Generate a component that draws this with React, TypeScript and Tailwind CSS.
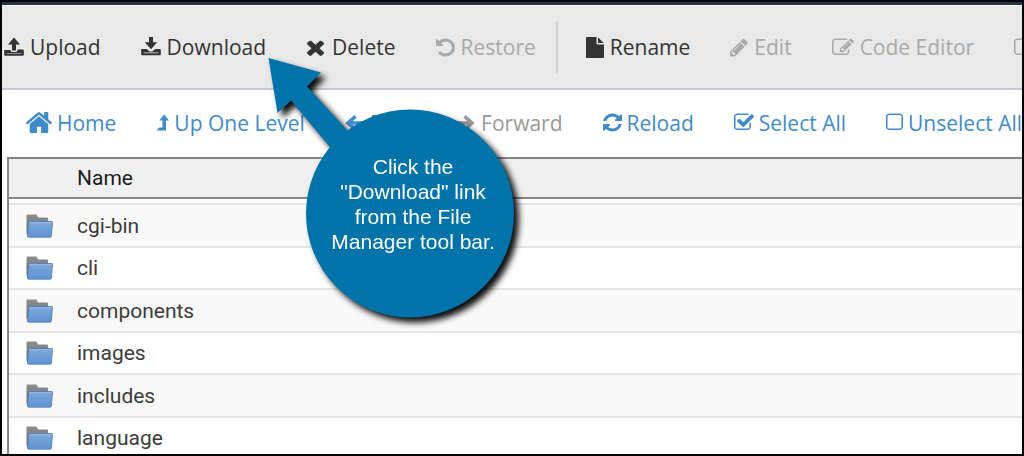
import type { ReactNode } from 'react';

type IconProps = { viewBox: string; className: string; children: ReactNode };

function Glyph({ viewBox, className, children }: IconProps) {
  return (
    <svg viewBox={viewBox} className={className} fill="currentColor" preserveAspectRatio="none" aria-hidden="true">
      {children}
    </svg>
  );
}

const UploadIcon = () => (
  <Glyph viewBox="0 0 20 20" className="w-5 h-5 shrink-0">
    <path d="M10 0.6 L16 7.4 H12 V13.4 H8 V7.4 H4 Z" />
    <path d="M0.2 13 H6.2 L7.6 14.9 H12.4 L13.8 12.4 H19 L19.8 13.2 V17.8 Q19.8 18.8 18.8 18.8 H1.2 Q0.2 18.8 0.2 17.8 Z M2.6 16.2 V16.8 H17.4 V16.2 Z" fillRule="evenodd" />
  </Glyph>
);

const DownloadIcon = () => (
  <Glyph viewBox="0 0 20 20" className="w-5 h-5 shrink-0">
    <path d="M8 0 H12 V5.2 H16.2 L10 12.2 L3.8 5.2 H8 Z" />
    <path d="M0.2 12 H5.6 L8.8 14.6 H11.2 L14.4 12 H19 L19.8 12.8 V17.2 Q19.8 18.2 18.8 18.2 H1.2 Q0.2 18.2 0.2 17.2 Z M2.6 15.6 V16.2 H17.4 V15.6 Z" fillRule="evenodd" />
  </Glyph>
);

const DeleteIcon = () => (
  <Glyph viewBox="302 0 1188 1792" className="w-[17px] h-[23px] ml-px mr-[2px] shrink-0">
    <path d="M1490 1322q0 40-28 68l-136 136q-28 28-68 28t-68-28l-294-294-294 294q-28 28-68 28t-68-28l-136-136q-28-28-28-68t28-68l294-294-294-294q-28-28-28-68t28-68l136-136q28-28 68-28t68 28l294 294 294-294q28-28 68-28t68 28l136 136q28 28 28 68t-28 68l-294 294 294 294q28 28 28 68z" />
  </Glyph>
);

const RestoreIcon = () => (
  <Glyph viewBox="128 0 1536 1792" className="w-[19px] h-[21px] shrink-0">
    <path d="M1664 896q0 156-61 298t-164 245-245 164-298 61q-172 0-327-72.5t-264-204.5q-7-10-6.5-22.5t8.5-20.5l137-138q10-9 25-9 16 2 23 12 73 95 179 147t225 52q104 0 198.5-40.5t163.5-109.5 109.5-163.5 40.5-198.5-40.5-198.5-109.5-163.5-163.5-109.5-198.5-40.5q-98 0-188 35.5t-160 101.5l137 138q31 30 14 69-17 40-59 40h-448q-26 0-45-19t-19-45v-448q0-42 40-59 39-17 69 14l130 129q107-101 244.5-156.5t284.5-55.5q156 0 298 61t245 164 164 245 61 298z" />
  </Glyph>
);

const RenameIcon = () => (
  <Glyph viewBox="128 0 1536 1792" className="w-[18px] h-[21px] shrink-0">
    <path d="M1152 512v-472q22 14 36 28l408 408q14 14 28 36h-472zm-128 32q0 40 28 68t68 28h544v1056q0 40-28 68t-68 28h-1344q-40 0-68-28t-28-68v-1600q0-40 28-68t68-28h800v544z" />
  </Glyph>
);

const EditIcon = () => (
  <Glyph viewBox="128 0 1536 1792" className="w-[18px] h-[21px] shrink-0">
    <path d="M491 1536l91-91-235-235-91 91v107h128v128h107zm523-928q0-22-22-22-10 0-17 7l-542 542q-7 7-7 17 0 22 22 22 10 0 17-7l542-542q7-7 7-17zm-54-192l416 416-832 832h-416v-416zm683 96q0 53-37 90l-166 166-416-416 166-165q36-38 90-38 53 0 91 38l235 234q37 39 37 91z" />
  </Glyph>
);

const EditorIcon = () => (
  <Glyph viewBox="0 0 1792 1792" className="w-[22px] h-[21px] shrink-0">
    <path d="M888 1184l116-116-152-152-116 116v56h96v96h56zm440-720q-16-16-33 1l-350 350q-17 17-1 33t33-1l350-350q17-17 1-33zm80 594v190q0 119-84.5 203.5t-203.5 84.5h-832q-119 0-203.5-84.5t-84.5-203.5v-832q0-119 84.5-203.5t203.5-84.5h832q63 0 117 25 15 7 18 23 3 17-9 29l-49 49q-14 14-32 8-23-6-45-6h-832q-66 0-113 47t-47 113v832q0 66 47 113t113 47h832q66 0 113-47t47-113v-126q0-13 9-22l64-64q15-15 35-7t20 29zm-96-738l288 288-672 672h-288v-288zm444 132l-92 92-288-288 92-92q28-28 68-28t68 28l152 152q28 28 28 68t-28 68z" />
  </Glyph>
);

const HomeIcon = () => (
  <Glyph viewBox="89 253 1614 1283" className="w-[26px] h-[21px] shrink-0">
    <path d="M1472 992v480q0 26-19 45t-45 19h-384v-384h-256v384h-384q-26 0-45-19t-19-45v-480q0-1 .5-3t.5-3l575-474 575 474q1 2 1 6zm223-69l-62 74q-8 9-21 11h-3q-13 0-21-7l-692-577-692 577q-12 8-24 7-13-2-21-11l-62-74q-8-10-7-23.5t11-21.5l719-599q32-26 76-26t76 26l244 204v-195q0-14 9-23t23-9h192q14 0 23 9t9 23v408l219 182q10 8 11 21.5t-7 23.5z" />
  </Glyph>
);

const UpIcon = () => (
  <Glyph viewBox="0 0 13 18" className="w-[13px] h-[18px] shrink-0">
    <path d="M8.2 0.6 L13 6.6 H10 V16.6 H0.6 L3.2 13.4 H6.4 V6.6 H3.4 Z" />
  </Glyph>
);

const BackIcon = () => (
  <Glyph viewBox="0 0 20 20" className="w-5 h-5 shrink-0">
    <path d="M10.5 3.4 L3 10 L10.5 16.6 M3 10 H19" fill="none" stroke="currentColor" strokeWidth="3.6" />
  </Glyph>
);

const ForwardIcon = () => (
  <Glyph viewBox="0 0 20 20" className="w-5 h-5 shrink-0">
    <path d="M8.5 3.4 L16 10 L8.5 16.6 M16 10 H1" fill="none" stroke="currentColor" strokeWidth="3.6" />
  </Glyph>
);

const ReloadIcon = () => (
  <Glyph viewBox="128 0 1536 1792" className="w-[19px] h-[21px] shrink-0">
    <path d="M1639 1056q0 5-1 7-64 268-268 434.5t-478 166.5q-146 0-282.5-55t-243.5-157l-129 129q-19 19-45 19t-45-19-19-45v-448q0-26 19-45t45-19h448q26 0 45 19t19 45-19 45l-137 137q71 66 161 102t187 36q134 0 250-65t186-179q11-17 53-117 8-23 30-23h192q13 0 22.5 9.5t9.5 22.5zm25-800v448q0 26-19 45t-45 19h-448q-26 0-45-19t-19-45 19-45l138-138q-148-137-349-137-134 0-250 65t-186 179q-11 17-53 117-8 23-30 23h-199q-13 0-22.5-9.5t-9.5-22.5v-7q65-268 270-434.5t480-166.5q146 0 284 55.5t245 156.5l130-129q19-19 45-19t45 19 19 45z" />
  </Glyph>
);

const CheckedIcon = () => (
  <Glyph viewBox="64 0 1664 1792" className="w-5 h-[21px] shrink-0">
    <path d="M1472 930v318q0 119-84.5 203.5t-203.5 84.5h-832q-119 0-203.5-84.5t-84.5-203.5v-832q0-119 84.5-203.5t203.5-84.5h832q63 0 117 25 15 7 18 23 3 17-9 29l-49 49q-10 10-23 10-3 0-9-2-23-6-45-6h-832q-66 0-113 47t-47 113v832q0 66 47 113t113 47h832q66 0 113-47t47-113v-254q0-13 9-22l64-64q10-10 23-10 6 0 12 3 20 8 20 29zm231-489l-814 814q-24 24-57 24t-57-24l-430-430q-24-24-24-57t24-57l110-110q24-24 57-24t57 24l263 263 647-647q24-24 57-24t57 24l110 110q24 24 24 57t-24 57z" />
  </Glyph>
);

const UncheckedIcon = () => (
  <Glyph viewBox="192 0 1408 1792" className="w-[17px] h-[21px] shrink-0">
    <path d="M1312 256h-832q-66 0-113 47t-47 113v832q0 66 47 113t113 47h832q66 0 113-47t47-113v-832q0-66-47-113t-113-47zm288 160v832q0 119-84.5 203.5t-203.5 84.5h-832q-119 0-203.5-84.5t-84.5-203.5v-832q0-119 84.5-203.5t203.5-84.5h832q119 0 203.5 84.5t84.5 203.5z" />
  </Glyph>
);

const FolderIcon = () => (
  <svg viewBox="0 0 27 24" className="block w-[27px] h-6" aria-hidden="true">
    <defs>
      <linearGradient id="folder-back" x1="0" y1="0" x2="0" y2="1">
        <stop offset="0" stopColor="#8e8e8e" />
        <stop offset="1" stopColor="#6a6d70" />
      </linearGradient>
      <linearGradient id="folder-front" x1="0" y1="0" x2="0" y2="1">
        <stop offset="0" stopColor="#7fa9da" />
        <stop offset="1" stopColor="#5f93d0" />
      </linearGradient>
    </defs>
    <path d="M0.5 1.5 Q0.5 0.5 1.5 0.5 H10.5 L12 3.5 H21 Q22 3.5 22 4.5 V21 H2.5 Q0.5 21 0.5 19 Z" fill="url(#folder-back)" />
    <path d="M3.5 7.5 H26 Q26.7 7.5 26.5 8.5 L25.4 22 Q25.3 23.2 24 23.2 H2.6 Q1.4 23.2 1.5 22 L2.7 8.5 Q2.8 7.5 3.5 7.5 Z" fill="url(#folder-front)" stroke="#4a7db8" strokeWidth="0.8" />
    <path d="M3.6 8.7 H25.6" stroke="#9dbfe6" strokeWidth="0.9" />
  </svg>
);

function ToolButton({ icon, label, disabled = false }: { icon: ReactNode; label: string; disabled?: boolean }) {
  return (
    <button
      type="button"
      disabled={disabled}
      className="flex shrink-0 items-center gap-1.5 whitespace-nowrap text-[#333333] disabled:text-[#a9a9a9]"
    >
      {icon}
      {label}
    </button>
  );
}

function NavButton({ icon, label, disabled = false }: { icon: ReactNode; label: string; disabled?: boolean }) {
  return (
    <button
      type="button"
      disabled={disabled}
      className="flex shrink-0 items-center gap-[5px] whitespace-nowrap text-[#428bca] disabled:text-[#999999]"
    >
      {icon}
      {label}
    </button>
  );
}

const folders = ['cgi-bin', 'cli', 'components', 'images', 'includes', 'language'];

function FileTable() {
  return (
    <table className="w-full border-separate border-spacing-0 border-l-2 border-t-2 border-[#868686] text-left font-[Roboto,sans-serif] text-[21px] leading-6 text-[#3c3c3c]">
      <thead>
        <tr className="h-10 bg-[#f0f0f0]">
          <th className="w-[68px] border-b-2 border-[#868686] p-0" aria-label="Type" />
          <th className="border-b-2 border-[#868686] p-0 font-normal text-[#1c1c1c]">Name</th>
        </tr>
      </thead>
      <tbody>
        <tr className="h-[6px]" aria-hidden="true">
          <td colSpan={2} className="border-b-2 border-[#e6e6e6] p-0" />
        </tr>
        {folders.map((name) => (
          <tr key={name} className="odd:h-[42px] even:h-[43px] odd:bg-white even:bg-[#f9f9f9]">
            <td className="border-b-2 border-[#e6e6e6] p-0 pl-[17px]">
              <FolderIcon />
            </td>
            <td className="border-b-2 border-[#e6e6e6] p-0">{name}</td>
          </tr>
        ))}
      </tbody>
    </table>
  );
}

function Callout() {
  return (
    <aside className="pointer-events-none absolute left-[265px] top-[55px] h-[262px] w-[248px] drop-shadow-[5px_5px_3px_rgba(0,0,0,0.95)]">
      <svg viewBox="0 0 248 262" className="absolute inset-0 h-full w-full" fill="#0073ab" aria-hidden="true">
        <path d="M1.5 1 L54 15.5 L40 29.5 L90 84 L72 101 L24 43.5 L10.5 56 Z" />
        <circle cx="143" cy="156.5" r="104" />
      </svg>
      <p className="absolute left-[52px] top-[97px] w-[188px] text-center font-['Liberation_Sans',Arial,sans-serif] text-[21px] leading-[25px] text-white">
        Click the
        <br />
        "Download" link
        <br />
        from the File
        <br />
        Manager tool bar.
      </p>
    </aside>
  );
}

export default function App() {
  return (
    <main className="relative h-screen overflow-hidden border-2 border-black bg-white font-['Open_Sans',sans-serif] text-[21px] leading-7">
      <div className="h-[3px] bg-[#22364c]" />
      <div
        role="toolbar"
        aria-label="File actions"
        className="flex h-[85px] items-center gap-10 overflow-hidden border-b-2 border-t border-b-[#c8c8d0] border-t-white bg-[#e9e9e9] pl-0.5"
      >
        <ToolButton icon={<UploadIcon />} label="Upload" />
        <ToolButton icon={<DownloadIcon />} label="Download" />
        <ToolButton icon={<DeleteIcon />} label="Delete" />
        <ToolButton icon={<RestoreIcon />} label="Restore" disabled />
        <div className="-ml-5 flex shrink-0 items-center">
          <div className="mr-7 h-[52px] w-0.5 bg-[#cfcfcf]" />
          <ToolButton icon={<RenameIcon />} label="Rename" />
        </div>
        <ToolButton icon={<EditIcon />} label="Edit" disabled />
        <ToolButton icon={<EditorIcon />} label="Code Editor" disabled />
        <button type="button" disabled aria-label="HTML Editor" className="shrink-0 text-[#a9a9a9]">
          <EditorIcon />
        </button>
      </div>
      <nav aria-label="Navigation" className="flex h-[67px] items-center gap-10 overflow-hidden pb-0.5 pl-6">
        <NavButton icon={<HomeIcon />} label="Home" />
        <NavButton icon={<UpIcon />} label="Up One Level" />
        <NavButton icon={<BackIcon />} label="Back" />
        <NavButton icon={<ForwardIcon />} label="Forward" disabled />
        <NavButton icon={<ReloadIcon />} label="Reload" />
        <NavButton icon={<CheckedIcon />} label="Select All" />
        <NavButton icon={<UncheckedIcon />} label="Unselect All" />
      </nav>
      <div className="pl-[5px]">
        <FileTable />
      </div>
      <Callout />
    </main>
  );
}
